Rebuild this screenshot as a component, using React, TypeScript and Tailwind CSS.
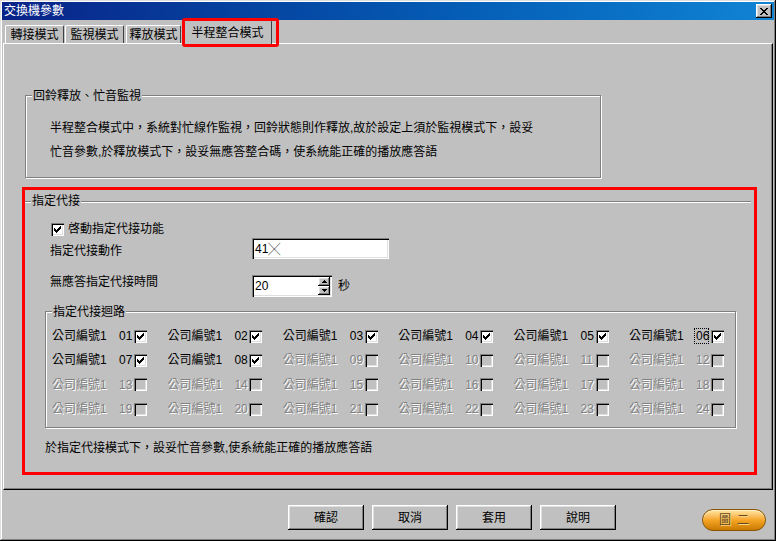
import React from "react";

const SUNKEN =
  "shadow-[inset_1px_1px_0_#808080,inset_2px_2px_0_#000,inset_-1px_-1px_0_#fff,inset_-2px_-2px_0_#dfdfdf]";
const RAISED =
  "shadow-[inset_-1px_-1px_0_#000,inset_1px_1px_0_#fff,inset_-2px_-2px_0_#808080,inset_2px_2px_0_#dfdfdf]";
const DIS = "text-[#808080] [text-shadow:1px_1px_0_#ffffff]";

function Check({ checked, disabled }: { checked?: boolean; disabled?: boolean }) {
  return (
    <span
      className={`relative inline-block w-[13px] h-[13px] shrink-0 ${disabled ? "bg-[#c0c0c0]" : "bg-white"} ${SUNKEN}`}
    >
      {checked && (
        <svg className="absolute left-0 top-0" width="13" height="13" viewBox="0 0 13 13" shapeRendering="crispEdges">
          <path
            d="M9 3h1v1h-1z M8 4h2v1h-2z M3 5h1v1h-1z M7 5h3v1h-3z M3 6h2v1h-2z M6 6h3v1h-3z M3 7h5v1h-5z M4 8h3v1h-3z M5 9h1v1h-1z"
            fill="#000"
          />
        </svg>
      )}
    </span>
  );
}

function Group({
  label,
  className,
  children,
}: {
  label: string;
  className?: string;
  children?: React.ReactNode;
}) {
  return (
    <div
      className={`relative border border-[#808080] shadow-[1px_1px_0_#fff,inset_1px_1px_0_#fff] ${className ?? ""}`}
    >
      <span className="absolute -top-[7px] left-[6px] px-[1px] bg-[#c0c0c0] leading-[14px] whitespace-nowrap">
        {label}
      </span>
      {children}
    </div>
  );
}

function Tab({ label, w }: { label: string; w: string }) {
  return (
    <div
      className={`${w} h-[18px] flex items-center justify-center border-t border-l border-white border-r border-r-[#404040] rounded-t-[2px] leading-[14px]`}
    >
      {label}
    </div>
  );
}

function Button({ label }: { label: string }) {
  return (
    <div className={`w-[76px] h-[25px] flex items-center justify-center bg-[#c0c0c0] ${RAISED} leading-[14px]`}>
      {label}
    </div>
  );
}

export default function App() {
  const cells = Array.from({ length: 24 }, (_, i) => i + 1);
  return (
    <div className="w-[776px] h-[541px] bg-[#c0c0c0] flex flex-col pt-[2px] px-[3px] overflow-hidden shadow-[inset_-1px_-1px_0_#000,inset_1px_1px_0_#dfdfdf,inset_-2px_-2px_0_#808080,inset_2px_2px_0_#fff] font-['Liberation_Sans','Noto_Sans_CJK_TC',sans-serif] text-[12px] text-black">
      {/* Title bar */}
      <div className="-mx-[1px] h-[18px] flex items-center bg-linear-to-r from-[#0a2288] to-[#1184d4] pl-[2px] pr-[2px]">
        <span className="text-white leading-[14px] text-[12px]">交換機參數</span>
        <div className={`ml-auto w-[16px] h-[14px] bg-[#c0c0c0] ${RAISED} flex items-center justify-center`}>
          <svg width="8" height="7" viewBox="0 0 8 7" shapeRendering="crispEdges">
            <path d="M0 0h2v1h-2z M6 0h2v1h-2z M1 1h2v1h-2z M5 1h2v1h-2z M2 2h4v1h-4z M3 3h2v1h-2z M2 4h4v1h-4z M1 5h2v1h-2z M5 5h2v1h-2z M0 6h2v1h-2z M6 6h2v1h-2z" fill="#000" />
          </svg>
        </div>
      </div>

      {/* Tabs */}
      <div className="flex items-end h-[23px] pl-[2px]">
        <Tab label="轉接模式" w="w-[59px]" />
        <div className="w-[1px]" />
        <Tab label="監視模式" w="w-[59px]" />
        <div className="w-[2px]" />
        <Tab label="釋放模式" w="w-[55px]" />
        <div className="w-[2px]" />
        <div className="relative z-10 w-[89px] h-[24px] -mb-[1px] bg-[#c0c0c0] border-t border-l border-white border-r border-r-[#404040] rounded-t-[2px] flex items-center justify-center leading-[14px]">
          半程整合模式
          <div className="absolute -left-[2px] -top-[3px] w-[97px] h-[29px] border-[3px] border-[#ff0000] rounded-[3px]" />
        </div>
      </div>

      {/* Panel */}
      <div className="h-[447px] flex flex-col border-t border-l border-white border-r border-b border-r-[#000] border-b-[#000] shadow-[inset_-1px_-1px_0_#808080]">
        <Group label="回鈴釋放、忙音監視" className="ml-[21px] mt-[51px] w-[576px] h-[83px] pt-[20px] pl-[24px]">
          <div className="leading-[24px]">
            <div>半程整合模式中，系統對忙線作監視，回鈴狀態則作釋放,故於設定上須於監視模式下，設妥</div>
            <div>忙音參數,於釋放模式下，設妥無應答整合碼，使系統能正確的播放應答語</div>
          </div>
        </Group>

        <div className="ml-[18px] mt-[9px] w-[735px] h-[288px] border-[3px] border-[#ff0000] flex flex-col">
          <div className="relative mt-[11px] border-t border-[#808080] shadow-[0_1px_0_#fff] mr-[3px]">
            <span className="absolute -top-[8px] left-[6px] px-[1px] bg-[#c0c0c0] leading-[14px]">指定代接</span>
          </div>

          <div className="flex items-center h-[14px] mt-[20px] pl-[26px]">
            <Check checked />
            <span className="ml-[4px] leading-[14px]">啓動指定代接功能</span>
          </div>

          <div className="flex items-center h-[21px] mt-[2px] pl-[25px]">
            <span className="w-[202px] pt-[4px] leading-[14px]">指定代接動作</span>
            <div className={`w-[137px] h-[21px] bg-white ${SUNKEN} flex items-center pl-[3px] leading-[14px]`}>
              41<span className="font-['Noto_Sans_CJK_TC',sans-serif] font-light">╳</span>
            </div>
          </div>

          <div className="flex items-start h-[22px] mt-[16px] pl-[25px]">
            <span className="w-[202px] leading-[14px]">無應答指定代接時間</span>
            <div className={`w-[80px] h-[22px] bg-white ${SUNKEN} flex items-center pl-[3px] pr-[2px]`}>
              <span className="flex-1 leading-[14px]">20</span>
              <div className="flex flex-col w-[12px] h-[18px]">
                <div className={`flex-1 bg-[#c0c0c0] ${RAISED} flex items-center justify-center`}>
                  <svg width="5" height="3" viewBox="0 0 5 3" shapeRendering="crispEdges">
                    <path d="M2 0h1v1h-1z M1 1h3v1h-3z M0 2h5v1h-5z" fill="#000" />
                  </svg>
                </div>
                <div className={`flex-1 bg-[#c0c0c0] ${RAISED} flex items-center justify-center`}>
                  <svg width="5" height="3" viewBox="0 0 5 3" shapeRendering="crispEdges">
                    <path d="M0 0h5v1h-5z M1 1h3v1h-3z M2 2h1v1h-1z" fill="#000" />
                  </svg>
                </div>
              </div>
            </div>
            <span className="ml-[6px] self-center leading-[14px]">秒</span>
          </div>

          <Group label="指定代接迴路" className="ml-[20px] mt-[14px] w-[691px] h-[117px] pt-[12px] pl-[6px]">
            <div className="grid grid-cols-[repeat(6,115.4px)] auto-rows-[24.3px]">
              {cells.map((n) => {
                const enabled = n <= 8;
                const num = String(n).padStart(2, "0");
                return (
                  <div key={n} className={`flex items-center ${enabled ? "" : DIS}`}>
                    <span className="w-[67px] leading-[14px] whitespace-nowrap">公司編號1</span>
                    <span className="w-[15px] leading-[14px] relative">
                      {n === 6 && (
                        <span className="absolute -left-[2px] -top-[1px] w-[15px] h-[16px] border border-dotted border-black" />
                      )}
                      {num}
                    </span>
                    <Check checked={enabled} disabled={!enabled} />
                  </div>
                );
              })}
            </div>
          </Group>

          <div className="ml-[20px] mt-[13px] leading-[14px]">於指定代接模式下，設妥忙音參數,使系統能正確的播放應答語</div>
        </div>
      </div>

      {/* Bottom buttons */}
      <div className="flex items-start mt-[15px] pl-[285px] gap-[8px]">
        <Button label="確認" />
        <Button label="取消" />
        <Button label="套用" />
        <Button label="說明" />
        <div className="ml-auto mr-[7px] mt-[4px] w-[64px] h-[22px] rounded-full border border-[#8a5200] bg-linear-to-b from-[#ffe6a0] via-[#f5a623] to-[#c97a00] shadow-[inset_0_1px_0_#fff3c8] flex items-center justify-center gap-[6px] text-[#5a4a2a] leading-[14px] [text-shadow:1px_1px_0_#ffd27a]">
          <span>圖</span>
          <span>二</span>
        </div>
      </div>
    </div>
  );
}
